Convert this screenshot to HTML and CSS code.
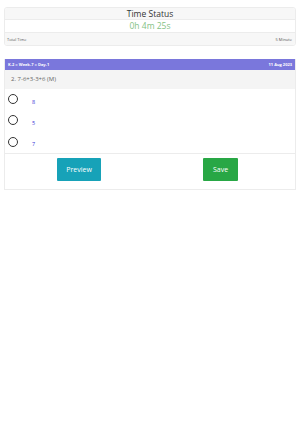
FILE: index.html
```html
<!DOCTYPE html>
<html lang="en">
<head>
    <meta charset="UTF-8">
    <meta name="viewport" content="width=device-width, initial-scale=1.0">
    <title>Quiz</title>
    <link rel="stylesheet" href="styles.css">
</head>
<body>
    <div class="page">
        <div class="status-card">
            <div class="status-title">Time Status</div>
            <div class="status-time">0h 4m 25s</div>
            <div class="status-foot">
                <span>Total Time</span>
                <span>5 Minute</span>
            </div>
        </div>

        <div class="question-card">
            <div class="question-bar">
                <span>K-2 » Week-7 » Day-1</span>
                <span>11 Aug 2023</span>
            </div>
            <div class="question-text">2. 7-6+3-3+6 (M)</div>
            <div class="options">
                <label class="option"><input type="radio" name="answer"><span>8</span></label>
                <label class="option"><input type="radio" name="answer"><span>5</span></label>
                <label class="option"><input type="radio" name="answer"><span>7</span></label>
            </div>
            <div class="actions">
                <div class="action-col"><button class="btn btn-preview">Preview</button></div>
                <div class="action-col"><button class="btn btn-save">Save</button></div>
            </div>
        </div>
    </div>
</body>
</html>
```

FILE: styles.css
```css
* {
    margin: 0;
    padding: 0;
    box-sizing: border-box;
}

body {
    font-family: "Open Sans", Arial, sans-serif;
    background-color: #fff;
    color: #333;
}

.page {
    padding: 7px 4px;
}

.status-card {
    border: 1px solid #ececec;
    border-radius: 3px;
    overflow: hidden;
}

.status-title {
    background-color: #f7f7f7;
    border-bottom: 1px solid #ececec;
    text-align: center;
    font-size: 8.5px;
    height: 12px;
    line-height: 12px;
    color: #333;
}

.status-time {
    text-align: center;
    font-size: 8.5px;
    height: 12px;
    line-height: 12px;
    color: #85c285;
}

.status-foot {
    display: flex;
    justify-content: space-between;
    align-items: center;
    background-color: #f7f7f7;
    border-top: 1px solid #ececec;
    height: 13px;
    padding: 0 3px 0 2px;
    font-size: 4px;
    color: #555;
}

.question-card {
    margin-top: 13px;
    border: 1px solid #ececec;
    border-top: none;
}

.question-bar {
    display: flex;
    justify-content: space-between;
    align-items: center;
    background-color: #7a77dc;
    color: #fff;
    font-weight: bold;
    font-size: 4px;
    height: 11px;
    padding: 0 3px;
}

.question-text {
    background-color: #f4f4f4;
    font-size: 6px;
    color: #666;
    height: 19px;
    line-height: 19px;
    padding-left: 6px;
}

.options {
    border-bottom: 1px solid #ececec;
}

.option {
    display: flex;
    align-items: center;
    height: 21.3px;
    padding-left: 3px;
}

.option input {
    appearance: none;
    width: 10px;
    height: 10px;
    border: 1px solid #333;
    border-radius: 50%;
    margin-top: -1px;
}

.option span {
    font-size: 5.5px;
    color: #3a36d6;
    margin-left: 14px;
    margin-top: 4px;
}

.actions {
    display: flex;
    padding: 4px 0 8px;
}

.action-col {
    flex: 1;
    display: flex;
    justify-content: center;
}

.btn {
    border: none;
    color: #fff;
    font-family: "Open Sans", Arial, sans-serif;
    font-size: 7px;
    height: 23px;
    border-radius: 1px;
}

.btn-preview {
    background-color: #17a2b8;
    width: 44px;
    margin-left: 3px;
}

.btn-save {
    background-color: #28a745;
    width: 35px;
    margin-right: 4px;
}
```
